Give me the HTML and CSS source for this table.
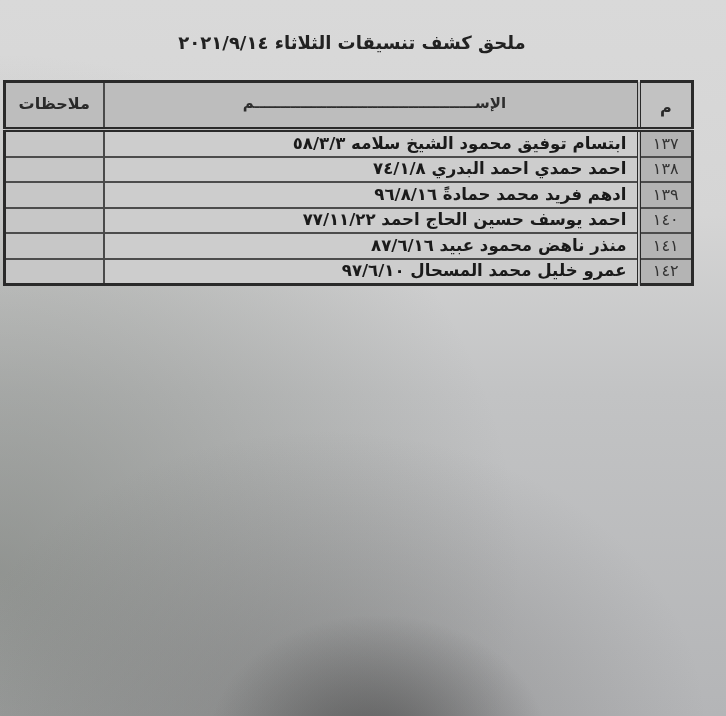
FILE: index.html
```html
<!DOCTYPE html>
<html lang="ar" dir="rtl">
<head>
<meta charset="utf-8">
<title>ملحق كشف تنسيقات الثلاثاء</title>
<link rel="stylesheet" href="styles.css">
</head>
<body>
<div class="page">
  <h1 class="title">ملحق كشف تنسيقات الثلاثاء <span class="date">٢٠٢١/٩/١٤</span></h1>
  <table class="sheet">
    <colgroup>
      <col class="c-num">
      <col class="c-name">
      <col class="c-note">
    </colgroup>
    <thead>
      <tr>
        <th class="num">م</th>
        <th class="name">الإســـــــــــــــــــــــــــــــــــــــــــم</th>
        <th class="note">ملاحظات</th>
      </tr>
    </thead>
    <tbody>
      <tr><td class="num">١٣٧</td><td class="name">ابتسام توفيق محمود الشيخ سلامه ٥٨/٣/٣</td><td class="note"></td></tr>
      <tr><td class="num">١٣٨</td><td class="name">احمد حمدي احمد البدري ٧٤/١/٨</td><td class="note"></td></tr>
      <tr><td class="num">١٣٩</td><td class="name">ادهم فريد محمد حمادةً ٩٦/٨/١٦</td><td class="note"></td></tr>
      <tr><td class="num">١٤٠</td><td class="name">احمد يوسف حسين الحاج احمد ٧٧/١١/٢٢</td><td class="note"></td></tr>
      <tr><td class="num">١٤١</td><td class="name">منذر ناهض محمود عبيد ٨٧/٦/١٦</td><td class="note"></td></tr>
      <tr><td class="num">١٤٢</td><td class="name">عمرو خليل محمد المسحال ٩٧/٦/١٠</td><td class="note"></td></tr>
    </tbody>
  </table>
</div>
</body>
</html>
```
FILE: styles.css
```css
html, body {
  margin: 0;
  padding: 0;
}
body {
  width: 726px;
  height: 716px;
  overflow: hidden;
  font-family: "DejaVu Sans", "Noto Sans", sans-serif;
  color: #1d1d1d;
  background:
    radial-gradient(ellipse 170px 130px at 52% 104%, rgba(75,75,75,0.7) 0%, rgba(75,75,75,0) 100%),
    radial-gradient(ellipse 380px 300px at 45% 102%, rgba(90,90,90,0.4) 0%, rgba(90,90,90,0) 100%),
    radial-gradient(ellipse 520px 520px at 0% 80%, rgba(95,100,92,0.45) 0%, rgba(95,100,92,0.2) 55%, rgba(95,100,92,0) 100%),
    linear-gradient(to bottom, #d9d9d9 0%, #d5d5d5 30%, #c2c3c4 55%, #b4b5b7 100%);
}
.page {
  width: 726px;
  height: 716px;
  display: flex;
  flex-direction: column;
  align-items: flex-start;
  filter: blur(0.35px);
}
.title {
  margin: 30px 0 0 0;
  width: 704px;
  align-self: flex-end;
  text-align: center;
  font-size: 18px;
  line-height: 26px;
  font-weight: bold;
  color: #222;
}
.date {
  unicode-bidi: isolate;
  direction: ltr;
}
.sheet {
  margin: 24px 32px 0 0;
  width: 688px;
  border-collapse: collapse;
  border: 3px solid #2a2a2a;
  table-layout: fixed;
}
.c-num { width: 54px; }
.c-name { width: 535px; }
.c-note { width: 99px; }
.sheet th, .sheet td {
  padding: 0;
  font-weight: bold;
}
.sheet thead th {
  height: 40px;
  background: #bdbdbd;
  border-bottom: 5px double #2a2a2a;
  font-size: 16px;
  color: #2a2a2a;
}
.sheet thead th.num {
  padding-top: 4px;
  background: #c2c2c2;
}
.sheet thead th.name {
  font-size: 15px;
  padding-bottom: 4px;
  padding-left: 8px;
  color: #2e2e2e;
}
.sheet thead th.note {
  padding-bottom: 4px;
}
.sheet td {
  height: 23.5px;
  border-top: 2px solid #4c4c4c;
  font-size: 16.6px;
  line-height: 22px;
}
.sheet tbody tr:first-child td {
  border-top: none;
}
.sheet .num {
  text-align: center;
  border-left: 4px double #2a2a2a;
}
.sheet td.num {
  background: #b4b4b4;
  font-weight: normal;
  font-size: 16px;
  color: #333;
}
.sheet td.name {
  text-align: right;
  padding-right: 10px;
  background: #cdcdcd;
  white-space: nowrap;
  color: #1a1a1a;
}
.sheet .name {
  border-left: 2px solid #4a4a4a;
}
.sheet td.note {
  background: #c7c7c7;
}
.sheet th.note {
  text-align: center;
}
```
